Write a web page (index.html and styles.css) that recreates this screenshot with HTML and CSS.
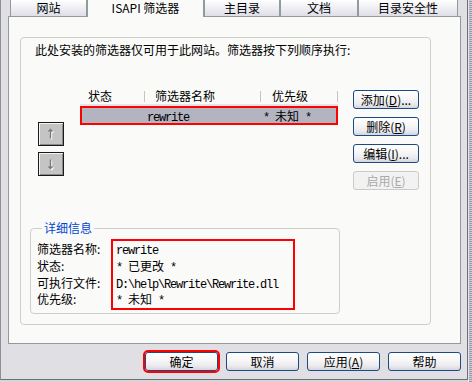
FILE: index.html
```html
<!DOCTYPE html>
<html lang="zh-CN">
<head>
<meta charset="utf-8">
<title>ISAPI 筛选器</title>
<link rel="stylesheet" href="styles.css">
</head>
<body>
<div class="screen">
  <div class="window">
    <div class="tabs">
      <div class="tab tab-w1">网站</div>
      <div class="tab tab-active tab-w2">ISAPI 筛选器</div>
      <div class="tab tab-w3">主目录</div>
      <div class="tab tab-w4">文档</div>
      <div class="tab tab-w5">目录安全性</div>
    </div>
    <div class="panel">
      <div class="group">
        <div class="intro">此处安装的筛选器仅可用于此网站。筛选器按下列顺序执行:</div>
        <div class="list-section">
          <div class="order-buttons">
            <button class="arrow-btn" type="button">
              <svg width="10" height="14" viewBox="0 0 10 14">
                <g fill="none" stroke="#ffffff" stroke-width="1.4" transform="translate(1 1)">
                  <path d="M4.5 2.5v9M2.5 4.5l2-2 2 2"/>
                </g>
                <g fill="none" stroke="#7a7a7a" stroke-width="1.4">
                  <path d="M4.5 2.5v9M2.5 4.5l2-2 2 2"/>
                </g>
              </svg>
            </button>
            <button class="arrow-btn" type="button">
              <svg width="10" height="14" viewBox="0 0 10 14">
                <g fill="none" stroke="#ffffff" stroke-width="1.4" transform="translate(1 1)">
                  <path d="M4.5 2.5v9M2.5 9.5l2 2 2-2"/>
                </g>
                <g fill="none" stroke="#7a7a7a" stroke-width="1.4">
                  <path d="M4.5 2.5v9M2.5 9.5l2 2 2-2"/>
                </g>
              </svg>
            </button>
          </div>
          <div class="list">
            <div class="list-head">
              <div class="col col-status">状态</div>
              <div class="col col-name">筛选器名称</div>
              <div class="col col-prio">优先级</div>
            </div>
            <div class="list-row">
              <div class="col col-status"></div>
              <div class="col col-name"><span class="mono">rewrite</span></div>
              <div class="col col-prio"><span class="mono">* </span><span class="cjk">未知</span><span class="mono"> *</span></div>
            </div>
          </div>
          <div class="side-buttons">
            <button class="btn side-btn" type="button">添加(<u>D</u>)...</button>
            <button class="btn side-btn" type="button">删除(<u>R</u>)</button>
            <button class="btn side-btn" type="button">编辑(<u>I</u>)...</button>
            <button class="btn side-btn btn-disabled" type="button" disabled>启用(<u>E</u>)</button>
          </div>
        </div>
        <fieldset class="details">
          <legend>详细信息</legend>
          <div class="details-body">
            <div class="labels">
              <div class="line">筛选器名称:</div>
              <div class="line">状态:</div>
              <div class="line">可执行文件:</div>
              <div class="line">优先级:</div>
            </div>
            <div class="values">
              <div class="line"><span class="mono">rewrite</span></div>
              <div class="line"><span class="mono">* </span><span class="cjk">已更改</span><span class="mono"> *</span></div>
              <div class="line"><span class="mono">D:\help\Rewrite\Rewrite.dll</span></div>
              <div class="line"><span class="mono">* </span><span class="cjk">未知</span><span class="mono"> *</span></div>
            </div>
          </div>
        </fieldset>
      </div>
    </div>
    <div class="footer">
      <button class="btn foot-btn btn-marked" type="button">确定</button>
      <button class="btn foot-btn" type="button">取消</button>
      <button class="btn foot-btn" type="button">应用(<u>A</u>)</button>
      <button class="btn foot-btn" type="button">帮助</button>
    </div>
  </div>
  <div class="edge"></div>
</div>
</body>
</html>
```

FILE: styles.css
```css
* { box-sizing: border-box; }

html, body {
  margin: 0;
  padding: 0;
}

body {
  font-family: "Noto Sans CJK SC", "Noto Sans", sans-serif;
  font-size: 12px;
  color: #000;
  background: #d6d5da;
}

.screen {
  display: flex;
  width: 472px;
  height: 382px;
  overflow: hidden;
}

.window {
  width: 468px;
  height: 380px;
  flex: none;
  display: flex;
  flex-direction: column;
  background: #e0dfe3;
  border-left: 1px solid #8e8e94;
  border-right: 1px solid #6e6e74;
  border-bottom: 1px solid #6e6e74;
}

.edge {
  flex: 1;
  height: 382px;
  background: repeating-linear-gradient(180deg, #c9c9d2 0 1px, #9c9cab 1px 2px);
  border-left: 1px solid #e6e6ea;
}

/* ---------- tabs ---------- */
.tabs {
  display: flex;
  align-items: flex-start;
  height: 16px;
  padding-left: 9px;
  position: relative;
  z-index: 1;
}

.tab {
  height: 16px;
  border-left: 1px solid #919b9c;
  border-right: 1px solid #919b9c;
  background: linear-gradient(#ffffff, #f0f0f4 45%, #dedee8);
  text-align: center;
  line-height: 16px;
  white-space: nowrap;
}

.tab-active {
  height: 17px;
  background: #fafaf9;
  line-height: 16px;
}

.tab-w1 { width: 77px; }
.tab-w2 { width: 117px; }
.tab-w3 { width: 76px; }
.tab-w4 { width: 78px; }
.tab-w5 { width: 100px; }

/* ---------- panel ---------- */
.panel {
  margin: 0 6px 0 7px;
  height: 328px;
  border: 1px solid #919b9c;
  background: #fafaf9;
  padding: 20px 0 0 11px;
}

.group {
  width: 411px;
  height: 288px;
  border: 1px solid #cfcfc9;
  border-radius: 4px;
  padding-top: 5px;
}

.intro {
  padding-left: 14px;
  line-height: 14px;
  white-space: nowrap;
}

.list-section {
  display: flex;
  align-items: flex-start;
  margin-top: 31px;
  height: 112px;
}

.order-buttons {
  display: flex;
  flex-direction: column;
  gap: 6px;
  margin-left: 17px;
  padding-top: 34px;
}

.arrow-btn {
  width: 26px;
  height: 24px;
  padding: 0;
  display: flex;
  align-items: center;
  justify-content: center;
  background: #c4c4c4;
  border: 1px solid #1a1a1a;
  box-shadow: inset 1px 1px 0 #f4f4f4, inset -1px -1px 0 #8a8a8a;
}

.list {
  margin-left: 16px;
  width: 258px;
}

.list-head {
  display: flex;
  height: 18px;
  border-bottom: 2px solid #e6e6e8;
}

.list-head .col {
  line-height: 16px;
  position: relative;
}

.list-head .col-status { padding-left: 8px; }
.list-head .col-name { padding-left: 10px; }
.list-head .col-prio { padding-left: 11px; }

.list-head .col::after {
  content: "";
  position: absolute;
  right: 0;
  top: 3px;
  width: 1px;
  height: 11px;
  background: #c4c4c4;
}

.col-status { width: 65px; }
.col-name { width: 116px; }
.col-prio { width: 77px; }

.list-row {
  display: flex;
  height: 19px;
  background: #b2b4bf;
  outline: 2px solid #ff0000;
  outline-offset: -2px;
}

.list-row .col {
  height: 19px;
  line-height: 19px;
  overflow: visible;
  white-space: nowrap;
}

.list-row .col-name { padding-left: 2px; }
.list-row .col-prio { padding-left: 2px; }

.mono {
  font-family: "Liberation Mono", "DejaVu Sans Mono", monospace;
  font-size: 12px;
  letter-spacing: -1.2px;
  white-space: pre;
}

.cjk {
  font-family: "Noto Sans CJK SC", sans-serif;
  font-size: 12px;
}

.side-buttons {
  display: flex;
  flex-direction: column;
  gap: 8px;
  margin-left: 15px;
  padding-top: 2px;
  width: 66px;
}

/* ---------- buttons ---------- */
.btn {
  font-family: "Noto Sans CJK SC", sans-serif;
  font-size: 12px;
  color: #000;
  padding: 0;
  border: 1px solid #1c4a84;
  border-radius: 3px;
  background: linear-gradient(#ffffff 0%, #f6f6f6 45%, #ebebef 75%, #d4d4de 100%);
  line-height: 16px;
  white-space: nowrap;
  overflow: visible;
}

.side-btn {
  width: 66px;
  height: 19px;
}

.btn u {
  text-decoration: underline;
  text-underline-offset: 1px;
}

.btn-disabled {
  color: #a9a9a9;
  border-color: #cacaca;
  background: #f2f2f2;
}

/* ---------- details ---------- */
.details {
  margin: 21px 0 0 9px;
  width: 310px;
  padding: 6px 0 5px 6px;
  border: 1px solid #cfcfc9;
  border-radius: 4px;
  min-inline-size: 0;
}

.details legend {
  margin-left: 5px;
  padding: 0 2px;
  line-height: 14px;
  color: #0046d5;
}

.details-body {
  display: flex;
  align-items: flex-start;
}

.labels {
  width: 76px;
  white-space: nowrap;
}

.line {
  height: 16.75px;
  line-height: 16.75px;
  overflow: visible;
  white-space: nowrap;
}

.values {
  width: 180px;
  height: 67px;
  padding-left: 3px;
  outline: 2px solid #ff0000;
}

/* ---------- footer ---------- */
.footer {
  display: flex;
  justify-content: flex-end;
  gap: 8px;
  margin-top: 8px;
  padding-right: 6px;
}

.foot-btn {
  width: 73px;
  height: 19px;
}

.btn-marked {
  outline: 2px solid #ff0000;
}
```
